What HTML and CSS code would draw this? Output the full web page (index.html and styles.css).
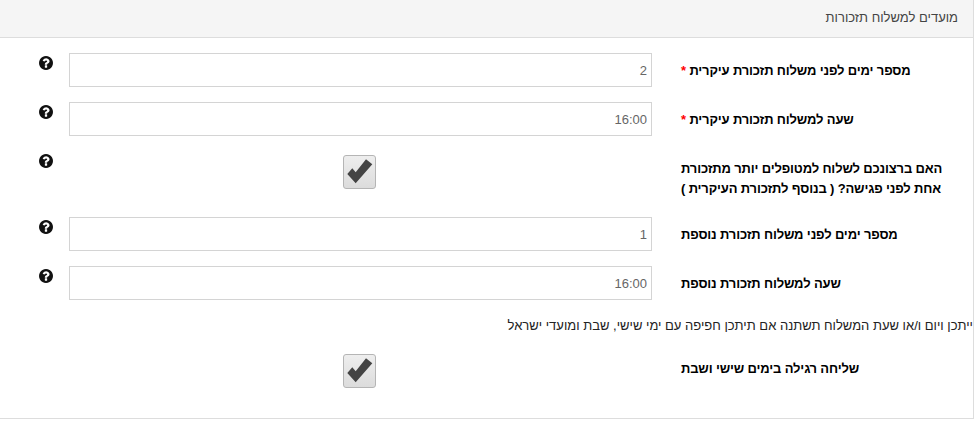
FILE: index.html
```html
<!DOCTYPE html>
<html dir="rtl" lang="he">
    <head>
        <meta charset="utf-8">
        <link rel="stylesheet" href="styles.css">
    </head>
    <body>
        <div class="panel">
            <div class="panel-head">מועדים למשלוח תזכורות</div>
            <div class="panel-body">
                <div class="row">
                    <label class="row-label">מספר ימים לפני משלוח תזכורת עיקרית <span class="req">*</span></label>
                    <input class="inputform" type="text" value="2">
                    <svg class="help" viewBox="0 128 1536 1536"><path d="M896 1376v-192q0-14-9-23t-23-9h-192q-14 0-23 9t-9 23v192q0 14 9 23t23 9h192q14 0 23-9t9-23zm256-672q0-88-55.500-163t-138.500-116-170-41q-243 0-371 213-15 24 8 42l132 100q7 6 19 6 16 0 25-12 53-68 86-92 34-24 86-24 48 0 85.500 26t37.500 59q0 38-20 61t-68 45q-63 28-115.500 86.500t-52.500 125.500v36q0 14 9 23t23 9h192q14 0 23-9t9-23q0-19 21.500-49.500t54.500-49.500q32-18 49-28.500t46-35 44.500-48 28-60.500 12.500-81zm384 192q0 209-103 385.500t-279.500 279.500-385.500 103-385.500-103-279.500-279.500-103-385.500 103-385.500 279.500-279.500 385.500-103 385.500 103 279.500 279.500 103 385.500z"/></svg>
                </div>
                <div class="row">
                    <label class="row-label">שעה למשלוח תזכורת עיקרית <span class="req">*</span></label>
                    <input class="inputform" type="text" value="16:00">
                    <svg class="help" viewBox="0 128 1536 1536"><path d="M896 1376v-192q0-14-9-23t-23-9h-192q-14 0-23 9t-9 23v192q0 14 9 23t23 9h192q14 0 23-9t9-23zm256-672q0-88-55.500-163t-138.500-116-170-41q-243 0-371 213-15 24 8 42l132 100q7 6 19 6 16 0 25-12 53-68 86-92 34-24 86-24 48 0 85.500 26t37.500 59q0 38-20 61t-68 45q-63 28-115.500 86.500t-52.500 125.500v36q0 14 9 23t23 9h192q14 0 23-9t9-23q0-19 21.500-49.500t54.500-49.500q32-18 49-28.500t46-35 44.500-48 28-60.500 12.500-81zm384 192q0 209-103 385.500t-279.500 279.500-385.500 103-385.500-103-279.500-279.500-103-385.500 103-385.500 279.500-279.500 385.500-103 385.500 103 279.500 279.500 103 385.500z"/></svg>
                </div>
                <div class="row row-tall">
                    <label class="row-label">האם ברצונכם לשלוח למטופלים יותר מתזכורת<br>אחת לפני פגישה? ( בנוסף לתזכורת העיקרית )</label>
                    <div class="check-cell">
                        <div class="checkbox"><svg viewBox="1 1 31 32"><path d="M4.300 19L9.300 13.300L12.700 17.300L23 4.300L29.300 9.300L12.700 28.300Z"/></svg></div>
                    </div>
                    <svg class="help" viewBox="0 128 1536 1536"><path d="M896 1376v-192q0-14-9-23t-23-9h-192q-14 0-23 9t-9 23v192q0 14 9 23t23 9h192q14 0 23-9t9-23zm256-672q0-88-55.500-163t-138.500-116-170-41q-243 0-371 213-15 24 8 42l132 100q7 6 19 6 16 0 25-12 53-68 86-92 34-24 86-24 48 0 85.500 26t37.500 59q0 38-20 61t-68 45q-63 28-115.500 86.500t-52.500 125.500v36q0 14 9 23t23 9h192q14 0 23-9t9-23q0-19 21.500-49.500t54.500-49.500q32-18 49-28.500t46-35 44.500-48 28-60.500 12.500-81zm384 192q0 209-103 385.500t-279.500 279.500-385.500 103-385.500-103-279.500-279.500-103-385.500 103-385.500 279.500-279.500 385.500-103 385.500 103 279.500 279.500 103 385.500z"/></svg>
                </div>
                <div class="row">
                    <label class="row-label">מספר ימים לפני משלוח תזכורת נוספת</label>
                    <input class="inputform" type="text" value="1">
                    <svg class="help" viewBox="0 128 1536 1536"><path d="M896 1376v-192q0-14-9-23t-23-9h-192q-14 0-23 9t-9 23v192q0 14 9 23t23 9h192q14 0 23-9t9-23zm256-672q0-88-55.500-163t-138.500-116-170-41q-243 0-371 213-15 24 8 42l132 100q7 6 19 6 16 0 25-12 53-68 86-92 34-24 86-24 48 0 85.500 26t37.500 59q0 38-20 61t-68 45q-63 28-115.500 86.500t-52.500 125.500v36q0 14 9 23t23 9h192q14 0 23-9t9-23q0-19 21.500-49.500t54.500-49.500q32-18 49-28.500t46-35 44.500-48 28-60.500 12.500-81zm384 192q0 209-103 385.500t-279.500 279.500-385.500 103-385.500-103-279.500-279.500-103-385.500 103-385.500 279.500-279.500 385.500-103 385.500 103 279.500 279.500 103 385.500z"/></svg>
                </div>
                <div class="row">
                    <label class="row-label">שעה למשלוח תזכורת נוספת</label>
                    <input class="inputform" type="text" value="16:00">
                    <svg class="help" viewBox="0 128 1536 1536"><path d="M896 1376v-192q0-14-9-23t-23-9h-192q-14 0-23 9t-9 23v192q0 14 9 23t23 9h192q14 0 23-9t9-23zm256-672q0-88-55.500-163t-138.500-116-170-41q-243 0-371 213-15 24 8 42l132 100q7 6 19 6 16 0 25-12 53-68 86-92 34-24 86-24 48 0 85.500 26t37.500 59q0 38-20 61t-68 45q-63 28-115.500 86.500t-52.500 125.500v36q0 14 9 23t23 9h192q14 0 23-9t9-23q0-19 21.500-49.500t54.500-49.500q32-18 49-28.500t46-35 44.500-48 28-60.500 12.500-81zm384 192q0 209-103 385.500t-279.500 279.500-385.500 103-385.500-103-279.500-279.500-103-385.500 103-385.500 279.500-279.500 385.500-103 385.500 103 279.500 279.500 103 385.500z"/></svg>
                </div>
                <p class="note">ייתכן ויום ו/או שעת המשלוח תשתנה אם תיתכן חפיפה עם ימי שישי, שבת ומועדי ישראל</p>
                <div class="row row-last">
                    <label class="row-label">שליחה רגילה בימים שישי ושבת</label>
                    <div class="check-cell check-cell-last">
                        <div class="checkbox"><svg viewBox="1 1 31 32"><path d="M4.300 19L9.300 13.300L12.700 17.300L23 4.300L29.300 9.300L12.700 28.300Z"/></svg></div>
                    </div>
                </div>
            </div>
        </div>
    </body>
</html>
```

FILE: styles.css
```css
body{
    margin:0;
    background-color:#fff;
    font-family:"Liberation Sans",Arial,sans-serif;
    font-size:13px;
    color:#222;
}

.panel{
    width:974px;
    height:419px;
    box-sizing:border-box;
    margin-right:2px;
    border-right:1px solid #ddd;
    border-bottom:1px solid #ddd;
}

.panel-head{
    height:38px;
    box-sizing:border-box;
    padding:0 15px 0 0;
    line-height:36px;
    color:#444;
    background-color:#f5f5f5;
    border-bottom:1px solid #ddd;
}

.panel-body{
    padding-top:15px;
}

.row{
    display:flex;
    align-items:flex-start;
    margin-bottom:15px;
    padding-right:26px;
}

.row-tall{
    height:51px;
}

.row-last{
    margin-bottom:0;
}

.row-label{
    width:266px;
    flex:none;
    box-sizing:border-box;
    margin-left:29px;
    padding-top:8px;
    font-weight:bold;
    line-height:20px;
    letter-spacing:-0.15px;
    color:#000;
    text-align:left;
    white-space:nowrap;
}

.req{
    color:#f00;
}

.inputform{
    width:583px;
    height:34px;
    flex:none;
    box-sizing:border-box;
    padding:6px 4px;
    border:1px solid #d4d4d4;
    border-radius:0;
    background-color:#fff;
    font-family:"Liberation Sans",Arial,sans-serif;
    font-size:13px;
    color:#666;
    text-align:right;
    direction:rtl;
}

.check-cell{
    width:583px;
    flex:none;
    box-sizing:border-box;
    display:flex;
    justify-content:center;
    padding-top:4px;
    padding-right:2px;
}

.check-cell-last{
    padding-top:3px;
}

.checkbox{
    width:33px;
    height:34px;
    box-sizing:border-box;
    display:flex;
    align-items:center;
    justify-content:center;
    border:1px solid #b5b5b5;
    border-radius:3px;
    background:linear-gradient(#eee,#dcdcdc);
}

.checkbox svg{
    width:31px;
    height:32px;
    fill:#444;
}

.help{
    width:14px;
    height:14px;
    flex:none;
    margin-right:16px;
    margin-top:3px;
    fill:#111;
}

.note{
    margin:0 0 15px;
    padding-top:1px;
    line-height:20px;
    color:#222;
    white-space:nowrap;
}
```
